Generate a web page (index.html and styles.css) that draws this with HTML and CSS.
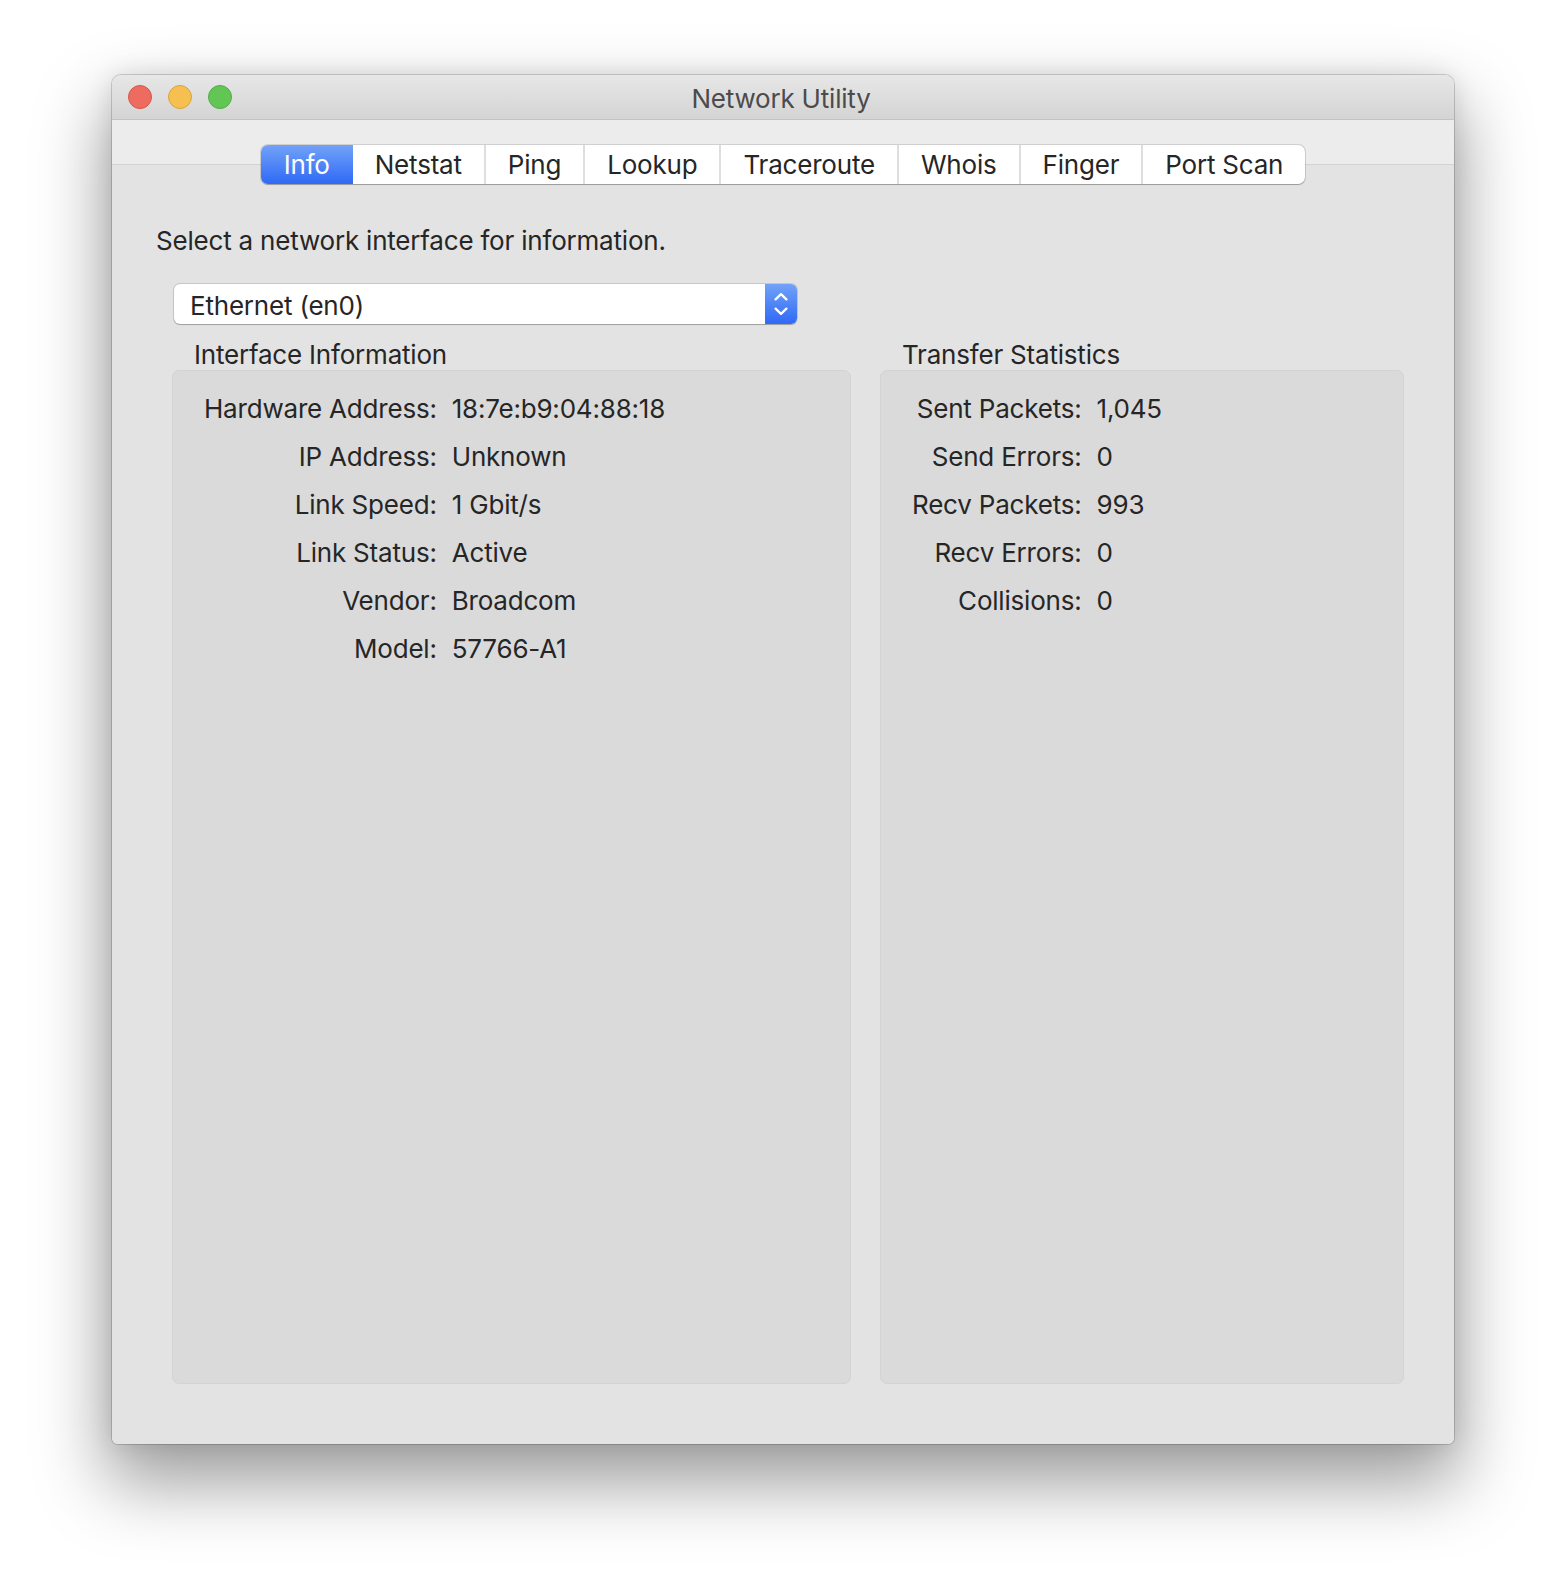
FILE: index.html
```html
<!DOCTYPE html>
<html>
<head>
<meta charset="utf-8">
<title>Network Utility</title>
<link rel="stylesheet" href="styles.css">
</head>
<body>
<div class="window">
  <div class="titlebar">
    <div class="lights">
      <span class="light red"></span>
      <span class="light yellow"></span>
      <span class="light green"></span>
    </div>
    <div class="title">Network Utility</div>
  </div>
  <div class="content">
    <div class="tabs">
      <div class="segmented">
        <div class="seg active">Info</div>
        <div class="seg">Netstat</div>
        <div class="seg">Ping</div>
        <div class="seg">Lookup</div>
        <div class="seg">Traceroute</div>
        <div class="seg">Whois</div>
        <div class="seg">Finger</div>
        <div class="seg">Port Scan</div>
      </div>
    </div>
    <div class="tabbox">
      <div class="prompt">Select a network interface for information.</div>
      <div class="popup">
        <div class="popup-label">Ethernet (en0)</div>
        <div class="popup-arrows">
          <svg width="14" height="24" viewBox="0 0 14 24"><path d="M1.6 7.4 L7 2.2 L12.4 7.4 M1.6 16.6 L7 21.8 L12.4 16.6" stroke="#fff" stroke-width="2.3" fill="none" stroke-linecap="round" stroke-linejoin="round"/></svg>
        </div>
      </div>
      <div class="columns">
        <div class="group left">
          <div class="group-title">Interface Information</div>
          <div class="group-box">
            <div class="kv">
              <div class="k">Hardware Address:</div><div class="v">18:7e:b9:04:88:18</div>
              <div class="k">IP Address:</div><div class="v">Unknown</div>
              <div class="k">Link Speed:</div><div class="v">1 Gbit/s</div>
              <div class="k">Link Status:</div><div class="v">Active</div>
              <div class="k">Vendor:</div><div class="v">Broadcom</div>
              <div class="k">Model:</div><div class="v">57766-A1</div>
            </div>
          </div>
        </div>
        <div class="group right">
          <div class="group-title">Transfer Statistics</div>
          <div class="group-box">
            <div class="kv">
              <div class="k">Sent Packets:</div><div class="v">1,045</div>
              <div class="k">Send Errors:</div><div class="v">0</div>
              <div class="k">Recv Packets:</div><div class="v">993</div>
              <div class="k">Recv Errors:</div><div class="v">0</div>
              <div class="k">Collisions:</div><div class="v">0</div>
            </div>
          </div>
        </div>
      </div>
    </div>
  </div>
</div>
</body>
</html>
```

FILE: styles.css
```css
html, body {
  margin: 0;
  padding: 0;
  background: #ffffff;
}

body {
  display: flex;
  justify-content: center;
  padding-top: 75px;
  height: 1592px;
  box-sizing: border-box;
  font-family: Inter, "Noto Sans", "Liberation Sans", sans-serif;
  color: #262626;
}

.window {
  width: 1342px;
  height: 1369px;
  display: flex;
  flex-direction: column;
  border-radius: 9px 9px 6px 6px;
  overflow: hidden;
  background: #ececec;
  box-shadow: 0 0 0 1px rgba(0, 0, 0, 0.16),
              0 34px 70px 6px rgba(0, 0, 0, 0.38),
              0 0 24px rgba(0, 0, 0, 0.10);
}

.titlebar {
  height: 44px;
  flex: none;
  display: flex;
  align-items: center;
  justify-content: center;
  background: linear-gradient(#e8e7e8, #d5d4d5);
  border-bottom: 1px solid #c3c3c3;
  position: relative;
}

.lights {
  position: absolute;
  left: 16px;
  top: 10px;
  display: flex;
  gap: 16px;
}

.light {
  width: 22px;
  height: 22px;
  border-radius: 50%;
  border: 1px solid;
}

.red { background: #ed6b5f; border-color: #d6564a; }
.yellow { background: #f5c04f; border-color: #d9a441; }
.green { background: #62c655; border-color: #52ac45; }

.title {
  font-size: 26px;
  color: #4b4b4b;
  letter-spacing: -0.2px;
  margin-top: 2px;
  margin-right: 4px;
}

.content {
  flex: 1;
  display: flex;
  flex-direction: column;
  padding-top: 25px;
}

.tabs {
  display: flex;
  justify-content: center;
  position: relative;
  z-index: 1;
}

.segmented {
  display: flex;
  height: 39px;
  box-sizing: border-box;
  background: #ffffff;
  border-radius: 7px;
  box-shadow: 0 0 0 1px rgba(0, 0, 0, 0.12), 0 1px 1px rgba(0, 0, 0, 0.22);
  overflow: hidden;
}

.seg {
  padding: 0 22px;
  display: flex;
  align-items: center;
  font-size: 26px;
  color: #262626;
  border-left: 2px solid #dedede;
  letter-spacing: -0.2px;
}

.seg:first-child {
  border-left: none;
}

.seg.active {
  background: linear-gradient(#72a2f8, #2f69f6);
  color: #ffffff;
  padding: 0 23px;
}

.seg.active + .seg {
  border-left: none;
}

.tabbox {
  flex: 1;
  margin-top: -20px;
  border-top: 1px solid #d2d2d2;
  background: #e3e3e3;
  padding: 60px 50px 60px 60px;
  display: flex;
  flex-direction: column;
}

.prompt {
  font-size: 26px;
  line-height: 32px;
  margin-left: -16px;
  letter-spacing: -0.2px;
}

.popup {
  margin-top: 27px;
  margin-left: 2px;
  width: 623px;
  height: 40px;
  display: flex;
  background: #ffffff;
  border-radius: 6px;
  box-shadow: 0 0 0 1px rgba(0, 0, 0, 0.12), 0 1px 1px rgba(0, 0, 0, 0.2);
  overflow: hidden;
}

.popup-label {
  flex: 1;
  display: flex;
  align-items: center;
  padding-left: 16px;
  padding-top: 2px;
  font-size: 26px;
  letter-spacing: -0.2px;
}

.popup-arrows {
  width: 32px;
  display: flex;
  align-items: center;
  justify-content: center;
  background: linear-gradient(#72a2f8, #2f69f6);
}

.columns {
  flex: 1;
  display: flex;
  gap: 29px;
  margin-top: 15px;
}

.group {
  display: flex;
  flex-direction: column;
}

.group.left { width: 679px; }
.group.right { flex: 1; }

.group-title {
  font-size: 26px;
  line-height: 31px;
  padding-left: 22px;
  letter-spacing: -0.2px;
}

.group-box {
  flex: 1;
  background: #dadada;
  border: 1px solid #d3d3d3;
  border-radius: 7px;
  padding: 14px 20px 0 31px;
}

.kv {
  display: grid;
  grid-template-columns: auto 1fr;
  column-gap: 15px;
  font-size: 26px;
  line-height: 48px;
  letter-spacing: -0.2px;
}

.k {
  text-align: right;
}
```
